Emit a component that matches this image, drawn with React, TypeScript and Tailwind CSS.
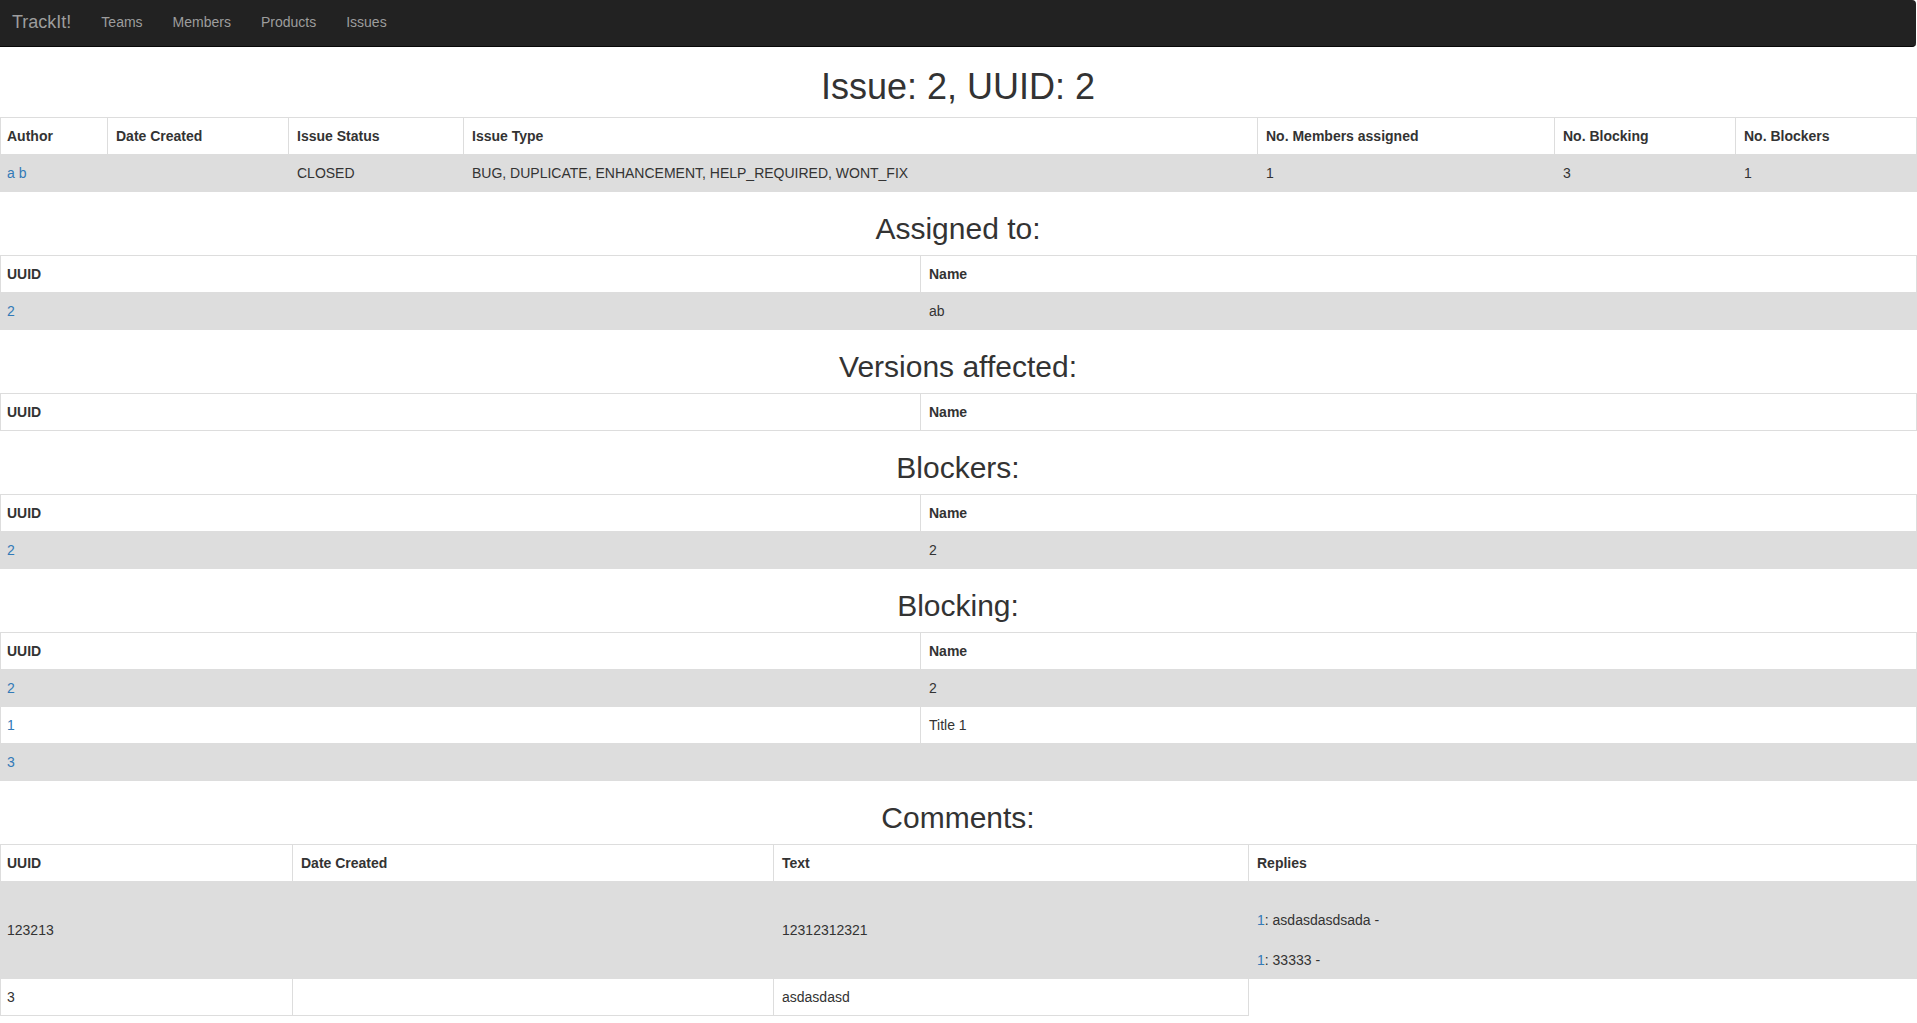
import React from 'react';

type Cell = React.ReactNode;

function Link({ children }: { children: React.ReactNode }) {
  return <a className="text-[#337ab7] no-underline">{children}</a>;
}

function DataTable({
  widths,
  head,
  rows,
}: {
  widths: string[];
  head: string[];
  rows: Cell[][];
}) {
  return (
    <table className="w-full table-fixed border-collapse">
      <colgroup>
        {widths.map((w, i) => (
          <col key={i} className={w} />
        ))}
      </colgroup>
      <thead>
        <tr>
          {head.map((h, i) => (
            <th
              key={i}
              className={`border border-[#ddd] py-2 text-left align-bottom font-bold ${i === 0 ? 'pl-[6px] pr-2' : 'px-2'}`}
            >
              {h}
            </th>
          ))}
        </tr>
      </thead>
      <tbody>
        {rows.map((r, ri) => (
          <tr key={ri} className={ri % 2 === 0 ? 'bg-[#ddd]' : 'bg-white'}>
            {r.map((c, ci) => (
              <td
                key={ci}
                className={`border border-[#ddd] py-2 align-middle ${ci === 0 ? 'pl-[6px] pr-2' : 'px-2'}`}
              >
                {c}
              </td>
            ))}
          </tr>
        ))}
      </tbody>
    </table>
  );
}

function Heading({ children }: { children: React.ReactNode }) {
  return (
    <h2 className="mt-5 mb-2.5 text-center text-[30px] leading-[33px] font-normal text-[#333]">
      {children}
    </h2>
  );
}

const twoCols = ['w-[920px]', 'w-[996px]'];

export default function App() {
  return (
    <div className="w-[1916px] bg-white font-['Liberation_Sans',Arial,sans-serif] text-[14px] leading-[20px] text-[#333]">
      <nav className="flex h-[47px] items-center rounded-r-[4px] border-b border-[#080808] bg-[#222] pb-[2px]">
        <span className="pl-[12px] pr-[15px] text-[18px] text-[#9d9d9d]">TrackIt!</span>
        <a className="px-[15px] text-[#9d9d9d]">Teams</a>
        <a className="px-[15px] text-[#9d9d9d]">Members</a>
        <a className="px-[15px] text-[#9d9d9d]">Products</a>
        <a className="px-[15px] text-[#9d9d9d]">Issues</a>
      </nav>

      <h1 className="mt-5 mb-2.5 text-center text-[36px] leading-[39.6px] font-normal text-[#333]">
        Issue: 2, UUID: 2
      </h1>
      <DataTable
        widths={['w-[107px]', 'w-[181px]', 'w-[175px]', 'w-[794px]', 'w-[297px]', 'w-[181px]', 'w-[181px]']}
        head={['Author', 'Date Created', 'Issue Status', 'Issue Type', 'No. Members assigned', 'No. Blocking', 'No. Blockers']}
        rows={[
          [
            <Link>a b</Link>,
            '',
            'CLOSED',
            'BUG, DUPLICATE, ENHANCEMENT, HELP_REQUIRED, WONT_FIX',
            '1',
            '3',
            '1',
          ],
        ]}
      />

      <Heading>Assigned to:</Heading>
      <DataTable widths={twoCols} head={['UUID', 'Name']} rows={[[<Link>2</Link>, 'ab']]} />

      <Heading>Versions affected:</Heading>
      <DataTable widths={twoCols} head={['UUID', 'Name']} rows={[]} />

      <Heading>Blockers:</Heading>
      <DataTable widths={twoCols} head={['UUID', 'Name']} rows={[[<Link>2</Link>, '2']]} />

      <Heading>Blocking:</Heading>
      <DataTable
        widths={twoCols}
        head={['UUID', 'Name']}
        rows={[
          [<Link>2</Link>, '2'],
          [<Link>1</Link>, 'Title 1'],
          [<Link>3</Link>, ''],
        ]}
      />

      <Heading>Comments:</Heading>
      <DataTable
        widths={['w-[292px]', 'w-[481px]', 'w-[475px]', 'w-[668px]']}
        head={['UUID', 'Date Created', 'Text', 'Replies']}
        rows={[
          [
            '123213',
            '',
            '12312312321',
            <div>
              <div className="h-5" />
              <div>
                <Link>1</Link>: asdasdasdsada -
              </div>
              <div className="h-5" />
              <div>
                <Link>1</Link>: 33333 -
              </div>
            </div>,
          ],
          ['3', '', 'asdasdasd'],
        ]}
      />
    </div>
  );
}
